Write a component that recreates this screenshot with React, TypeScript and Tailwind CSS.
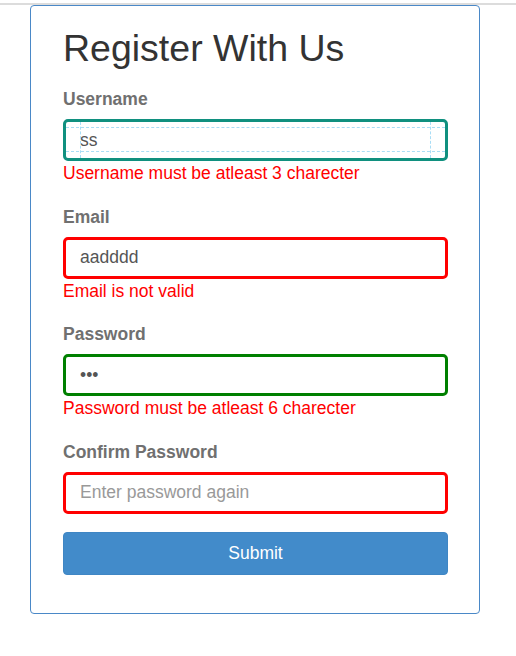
import React from 'react';

const font = { fontFamily: '"Liberation Sans", Arial, sans-serif' };

interface FieldProps {
  label: string;
  type?: string;
  value?: string;
  placeholder?: string;
  borderClass: string;
  error?: string;
  guides?: boolean;
}

function Field({ label, type = 'text', value, placeholder, borderClass, error, guides }: FieldProps) {
  return (
    <div className="flex flex-col">
      <label className="text-[17.5px] leading-[25px] font-bold text-[#707070] mb-[7px]">{label}</label>
      <div className="relative">
        <input
          type={type}
          readOnly
          value={value ?? ''}
          placeholder={placeholder}
          className={
            'block w-full h-[42px] px-[14px] rounded-[5px] border-[3px] bg-white text-[17.5px] text-[#555] placeholder:text-[#999] outline-none ' +
            borderClass
          }
        />
        {/* devtools box-model guides over the focused input */}
        {guides && (
          <div className="absolute inset-[3px] pointer-events-none flex flex-col pt-[5px] pb-[6px]">
            <div className="flex-1 border-y border-dashed border-[#a9ddf6] -mx-0" />
            <div className="absolute inset-0 px-[14px]">
              <div className="h-full border-x border-dashed border-[#a9ddf6]" />
            </div>
          </div>
        )}
      </div>
      {error && <p className="text-[17.5px] leading-[25px] text-[#ff0000]">{error}</p>}
    </div>
  );
}

export default function App() {
  return (
    <div className="min-h-screen bg-white pt-[3px]" style={font}>
      {/* top rule */}
      <div className="h-[2px] bg-[#dcdcdc]" />

      {/* Register card */}
      <div className="ml-[30px] w-[450px] border border-[#4a88c7] rounded-[4px] pl-[32px] pr-[31px] pt-[22px] pb-[38px]">
        <h1 className="text-[37.5px] leading-[41px] text-[#333] mb-[18px]">Register With Us</h1>

        <div className="flex flex-col gap-[18.5px]">
          <Field
            label="Username"
            value="ss"
            borderClass="border-[#10907f]"
            error="Username must be atleast 3 charecter"
            guides
          />
          <Field label="Email" value="aadddd" borderClass="border-[#ff0000]" error="Email is not valid" />
          <Field
            label="Password"
            type="password"
            value="abc"
            borderClass="border-[#008000]"
            error="Password must be atleast 6 charecter"
          />
          <Field label="Confirm Password" type="password" placeholder="Enter password again" borderClass="border-[#ff0000]" />

          <button className="block w-full h-[43px] rounded-[4px] bg-[#428bca] border border-[#3f86c4] text-white text-[17.5px]">
            Submit
          </button>
        </div>
      </div>
    </div>
  );
}
